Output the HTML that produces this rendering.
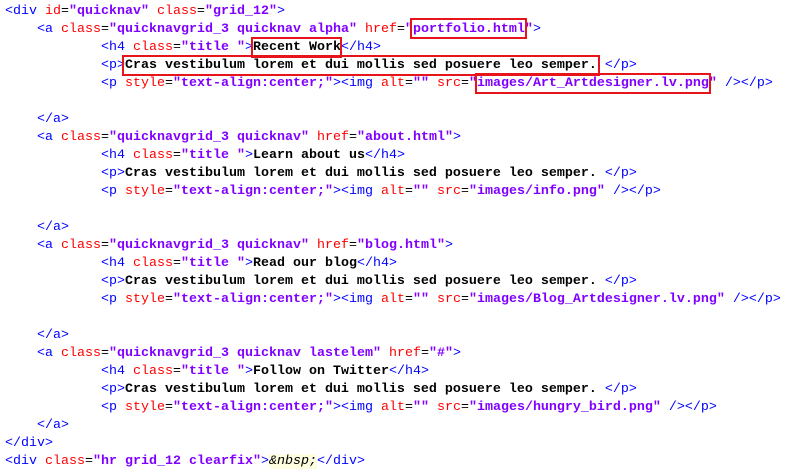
<!DOCTYPE html>
<html><head><meta charset="utf-8"><style>
html,body{margin:0;padding:0;background:#fff;width:788px;height:469px;overflow:hidden}
pre{margin:0;position:absolute;left:5px;top:3px;font-family:"Liberation Mono","Courier New",monospace;font-size:13.33px;line-height:18px;font-weight:bold;color:#000}
.t{color:#0000ff;font-weight:normal}
.a{color:#ff0000;font-weight:normal}
.e{font-weight:normal}
.v{color:#8000ff}
.n{font-style:italic;background:#fefde0;font-weight:normal}
.box{position:absolute;border:2px solid #e8141c;box-sizing:border-box}
</style></head><body>
<pre><span class="t">&lt;div</span> <span class="a">id</span><span class="e">=</span><span class="v">"quicknav"</span> <span class="a">class</span><span class="e">=</span><span class="v">"grid_12"</span><span class="t">&gt;</span>
    <span class="t">&lt;a</span> <span class="a">class</span><span class="e">=</span><span class="v">"quicknavgrid_3 quicknav alpha"</span> <span class="a">href</span><span class="e">=</span><span class="v">"portfolio.html"</span><span class="t">&gt;</span>
            <span class="t">&lt;h4</span> <span class="a">class</span><span class="e">=</span><span class="v">"title "</span><span class="t">&gt;</span>Recent Work<span class="t">&lt;/h4&gt;</span>
            <span class="t">&lt;p&gt;</span>Cras vestibulum lorem et dui mollis sed posuere leo semper. <span class="t">&lt;/p&gt;</span>
            <span class="t">&lt;p</span> <span class="a">style</span><span class="e">=</span><span class="v">"text-align:center;"</span><span class="t">&gt;&lt;img</span> <span class="a">alt</span><span class="e">=</span><span class="v">""</span> <span class="a">src</span><span class="e">=</span><span class="v">"images/Art_Artdesigner.lv.png"</span> <span class="t">/&gt;&lt;/p&gt;</span>

    <span class="t">&lt;/a&gt;</span>
    <span class="t">&lt;a</span> <span class="a">class</span><span class="e">=</span><span class="v">"quicknavgrid_3 quicknav"</span> <span class="a">href</span><span class="e">=</span><span class="v">"about.html"</span><span class="t">&gt;</span>
            <span class="t">&lt;h4</span> <span class="a">class</span><span class="e">=</span><span class="v">"title "</span><span class="t">&gt;</span>Learn about us<span class="t">&lt;/h4&gt;</span>
            <span class="t">&lt;p&gt;</span>Cras vestibulum lorem et dui mollis sed posuere leo semper. <span class="t">&lt;/p&gt;</span>
            <span class="t">&lt;p</span> <span class="a">style</span><span class="e">=</span><span class="v">"text-align:center;"</span><span class="t">&gt;&lt;img</span> <span class="a">alt</span><span class="e">=</span><span class="v">""</span> <span class="a">src</span><span class="e">=</span><span class="v">"images/info.png"</span> <span class="t">/&gt;&lt;/p&gt;</span>

    <span class="t">&lt;/a&gt;</span>
    <span class="t">&lt;a</span> <span class="a">class</span><span class="e">=</span><span class="v">"quicknavgrid_3 quicknav"</span> <span class="a">href</span><span class="e">=</span><span class="v">"blog.html"</span><span class="t">&gt;</span>
            <span class="t">&lt;h4</span> <span class="a">class</span><span class="e">=</span><span class="v">"title "</span><span class="t">&gt;</span>Read our blog<span class="t">&lt;/h4&gt;</span>
            <span class="t">&lt;p&gt;</span>Cras vestibulum lorem et dui mollis sed posuere leo semper. <span class="t">&lt;/p&gt;</span>
            <span class="t">&lt;p</span> <span class="a">style</span><span class="e">=</span><span class="v">"text-align:center;"</span><span class="t">&gt;&lt;img</span> <span class="a">alt</span><span class="e">=</span><span class="v">""</span> <span class="a">src</span><span class="e">=</span><span class="v">"images/Blog_Artdesigner.lv.png"</span> <span class="t">/&gt;&lt;/p&gt;</span>

    <span class="t">&lt;/a&gt;</span>
    <span class="t">&lt;a</span> <span class="a">class</span><span class="e">=</span><span class="v">"quicknavgrid_3 quicknav lastelem"</span> <span class="a">href</span><span class="e">=</span><span class="v">"#"</span><span class="t">&gt;</span>
            <span class="t">&lt;h4</span> <span class="a">class</span><span class="e">=</span><span class="v">"title "</span><span class="t">&gt;</span>Follow on Twitter<span class="t">&lt;/h4&gt;</span>
            <span class="t">&lt;p&gt;</span>Cras vestibulum lorem et dui mollis sed posuere leo semper. <span class="t">&lt;/p&gt;</span>
            <span class="t">&lt;p</span> <span class="a">style</span><span class="e">=</span><span class="v">"text-align:center;"</span><span class="t">&gt;&lt;img</span> <span class="a">alt</span><span class="e">=</span><span class="v">""</span> <span class="a">src</span><span class="e">=</span><span class="v">"images/hungry_bird.png"</span> <span class="t">/&gt;&lt;/p&gt;</span>
    <span class="t">&lt;/a&gt;</span>
<span class="t">&lt;/div&gt;</span>
<span class="t">&lt;div</span> <span class="a">class</span><span class="e">=</span><span class="v">"hr grid_12 clearfix"</span><span class="t">&gt;</span><span class="n">&amp;nbsp;</span><span class="t">&lt;/div&gt;</span></pre>
<div class="box" style="left:410px;top:18px;width:117px;height:21px"></div>
<div class="box" style="left:251px;top:37px;width:91px;height:21px"></div>
<div class="box" style="left:122px;top:55px;width:478px;height:21px"></div>
<div class="box" style="left:475px;top:73px;width:236px;height:21px"></div>
</body></html>
